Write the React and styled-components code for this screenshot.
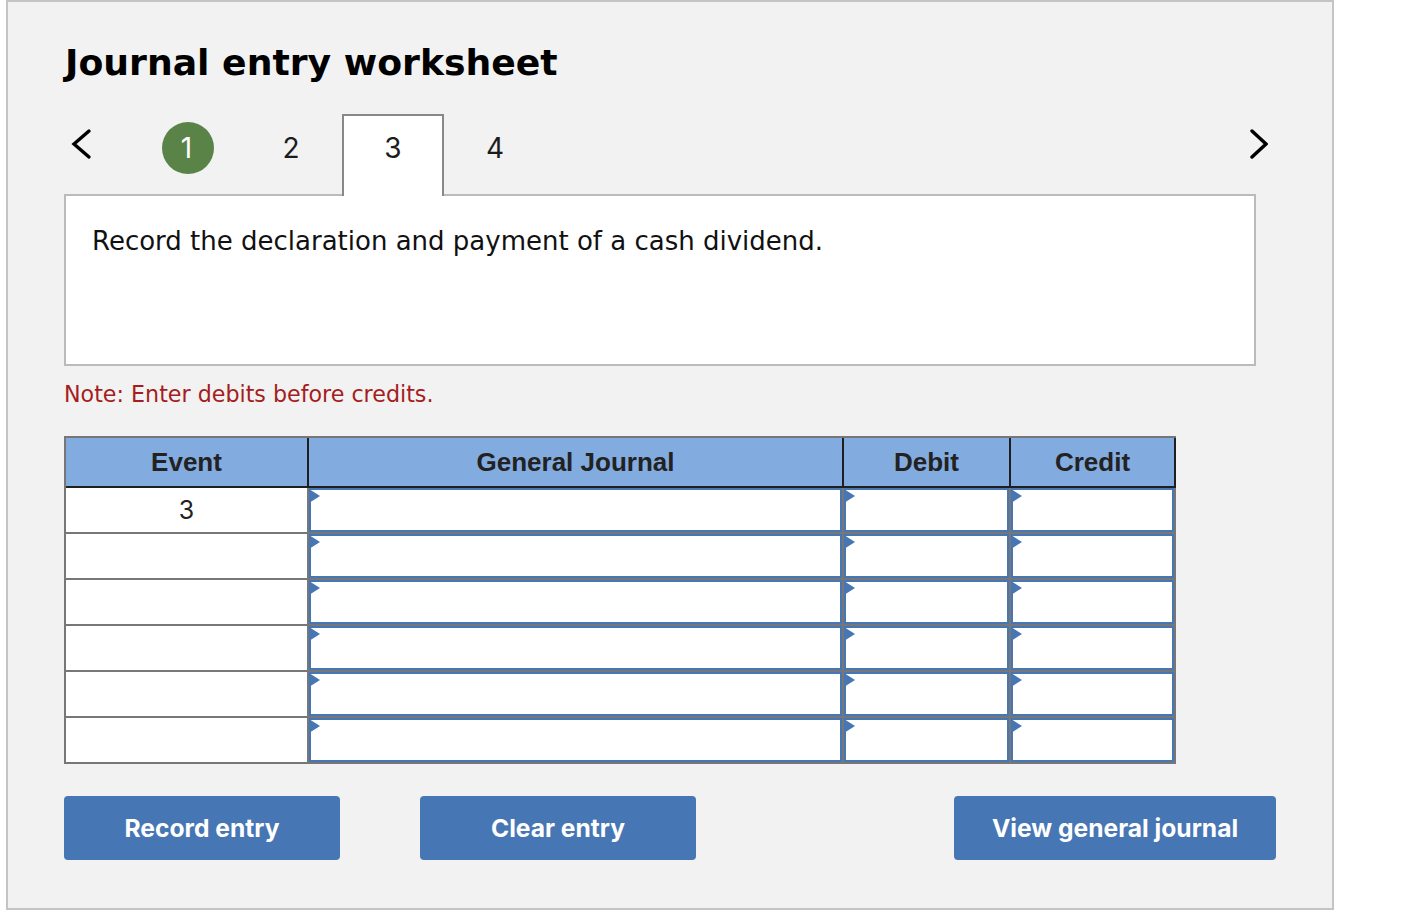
import React from 'react';
import styled, { createGlobalStyle } from 'styled-components';

const GlobalStyle = createGlobalStyle`
  body {
    margin: 0;
    background: #fff;
    font-family: "DejaVu Sans", Verdana, sans-serif;
  }
`;

const Panel = styled.div`
  box-sizing: border-box;
  width: 1328px;
  height: 910px;
  margin-left: 6px;
  padding: 0 56px;
  background: #f2f2f2;
  border: 2px solid #c4c4c4;
`;

const Title = styled.h1`
  margin: 0 0 0 1px;
  padding-top: 38px;
  font-size: 36.2px;
  line-height: 46px;
  font-weight: 700;
  color: #000;
`;

const TabBar = styled.div`
  display: flex;
  width: 1204px;
  height: 80px;
  margin-top: 28px;
  align-items: flex-start;
`;

const Arrow = styled.button`
  width: 72px;
  height: 80px;
  padding: 0;
  border: 0;
  background: none;
  display: block;
  flex: none;
  &:last-child {
    margin-left: auto;
    width: 34px;
  }
`;

const Tab = styled.div`
  position: relative;
  z-index: 1;
  box-sizing: border-box;
  width: ${p => p.$wide ? '104px' : '102px'};
  height: 82px;
  display: flex;
  justify-content: center;
  padding-top: 8px;
  font-family: Inter, sans-serif;
  font-size: 28px;
  line-height: 52px;
  color: #1c1c1c;
  ${p => p.$active && `
    background: #fff;
    border: 2px solid #888;
    border-bottom: 0;
    padding-top: 6px;
  `}
`;

const Circle = styled.span`
  box-sizing: border-box;
  width: 52px;
  height: 52px;
  padding-right: 3px;
  border-radius: 50%;
  background: #5a8348;
  color: #fff;
  text-align: center;
`;

const Prompt = styled.div`
  box-sizing: border-box;
  width: 1192px;
  height: 172px;
  padding: 28px 26px;
  background: #fff;
  border: 2px solid #bbb;
  font-size: 26px;
  line-height: 34px;
  color: #111;
`;

const Note = styled.p`
  margin: 13px 0 0;
  height: 57px;
  font-size: 22.2px;
  line-height: 30px;
  color: #a51d1d;
`;

const Table = styled.div`
  box-sizing: border-box;
  width: 1112px;
  display: grid;
  grid-template-columns: 243px 535px 167px 1fr;
  border-top: 2px solid #777;
  border-left: 2px solid #777;
`;

const HeadCell = styled.div`
  box-sizing: border-box;
  height: 50px;
  background: #82abe0;
  border-right: 2px solid #1f1f1f;
  border-bottom: 2px solid #1f1f1f;
  font-family: "Liberation Sans", Arial, sans-serif;
  font-weight: 700;
  font-size: 26px;
  line-height: 48px;
  text-align: center;
  color: #222;
`;

const EventCell = styled.div`
  box-sizing: border-box;
  height: 46px;
  background: #fff;
  border-right: 2px solid #777;
  border-bottom: 2px solid #777;
  font-family: Inter, sans-serif;
  font-size: 25px;
  line-height: 44px;
  text-align: center;
  color: #222;
`;

const InputCell = styled.div`
  position: relative;
  box-sizing: border-box;
  height: 46px;
  background: #fff;
  border-right: 2px solid #777;
  border-bottom: 2px solid #777;
  box-shadow: inset 2px 2px 0 #4776b4, inset -2px -2px 0 #4776b4;
  &::before {
    content: "";
    position: absolute;
    left: 0;
    top: 1px;
    border-left: 11px solid #4776b4;
    border-top: 7.5px solid transparent;
    border-bottom: 7.5px solid transparent;
  }
`;

const Actions = styled.div`
  display: flex;
  width: 1212px;
  margin-top: 32px;
`;

const ActionButton = styled.button`
  box-sizing: border-box;
  width: ${p => p.$width}px;
  height: 64px;
  margin-left: ${p => p.$gap || 0}px;
  padding: 0;
  border: 0;
  border-radius: 4px;
  background: #4776b4;
  color: #fff;
  font-family: Inter, sans-serif;
  font-size: 24.6px;
  font-weight: 700;
`;

const Chevron = ({ right }) => (
  <svg width="34" height="80" viewBox="0 0 34 80" fill="none" style={{ display: 'block' }}>
    <polyline
      points={right ? '18,17 32,30 18,43' : '25,17 10,30 25,43'}
      stroke="#000"
      strokeWidth="3.4"
      strokeLinecap="round"
      strokeLinejoin="miter"
    />
  </svg>
);

const rows = [
  { event: '3' },
  { event: '' },
  { event: '' },
  { event: '' },
  { event: '' },
  { event: '' },
];

export default function App() {
  return (
    <>
      <GlobalStyle />
      <Panel>
        <Title>Journal entry worksheet</Title>
        <TabBar>
          <Arrow aria-label="Previous"><Chevron /></Arrow>
          <Tab $wide><Circle>1</Circle></Tab>
          <Tab>2</Tab>
          <Tab $active>3</Tab>
          <Tab>4</Tab>
          <Arrow aria-label="Next"><Chevron right /></Arrow>
        </TabBar>
        <Prompt>Record the declaration and payment of a cash dividend.</Prompt>
        <Note>Note: Enter debits before credits.</Note>
        <Table>
          <HeadCell>Event</HeadCell>
          <HeadCell>General Journal</HeadCell>
          <HeadCell>Debit</HeadCell>
          <HeadCell>Credit</HeadCell>
          {rows.map((row, i) => (
            <React.Fragment key={i}>
              <EventCell>{row.event}</EventCell>
              <InputCell />
              <InputCell />
              <InputCell />
            </React.Fragment>
          ))}
        </Table>
        <Actions>
          <ActionButton $width={276}>Record entry</ActionButton>
          <ActionButton $width={276} $gap={80}>Clear entry</ActionButton>
          <ActionButton $width={322} $gap={258}>View general journal</ActionButton>
        </Actions>
      </Panel>
    </>
  );
}
